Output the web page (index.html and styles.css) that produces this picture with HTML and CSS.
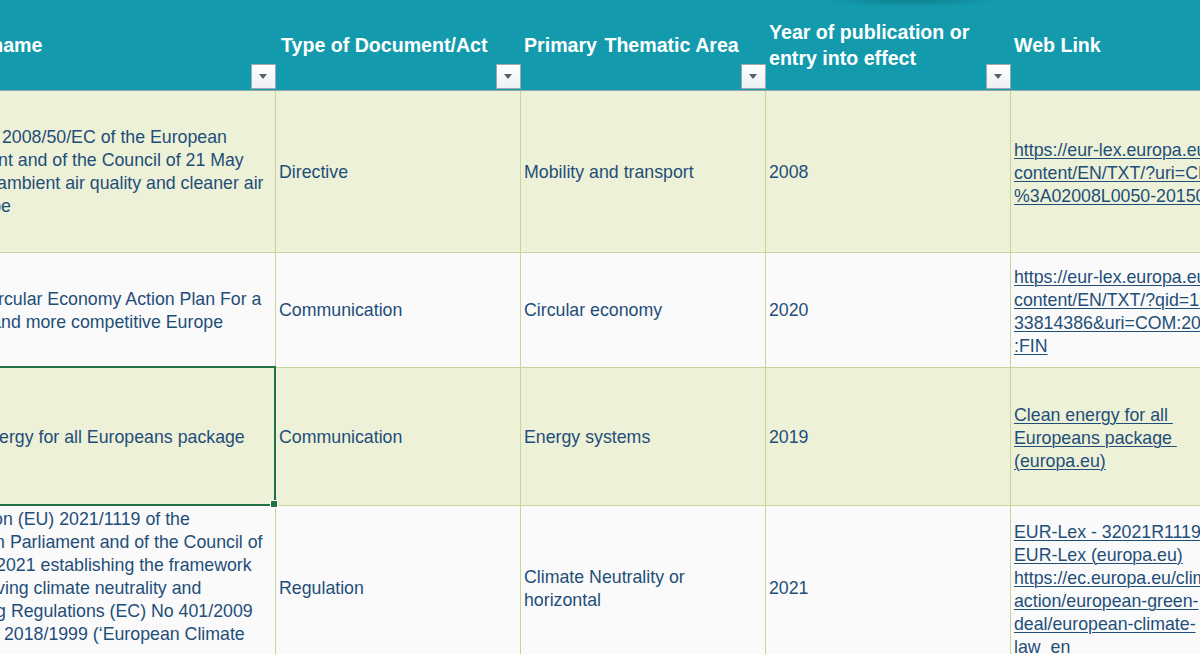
FILE: index.html
```html
<!DOCTYPE html>
<html lang="en">
<head>
<meta charset="utf-8">
<title>Policy sheet</title>
<link rel="stylesheet" href="styles.css">
</head>
<body>
<div class="sheet">
  <div class="row head">
    <div class="cell c1"><span class="htext">Policy name</span><span class="dd"></span></div>
    <div class="cell c2"><span class="htext indent">Type of Document/Act</span><span class="dd"></span></div>
    <div class="cell c3"><span class="htext">Primary <span class="gap"></span>Thematic Area</span><span class="dd"></span></div>
    <div class="cell c4"><span class="htext">Year of publication or<br>entry into effect</span><span class="dd"></span></div>
    <div class="cell c5"><span class="htext">Web Link</span></div>
  </div>

  <div class="row r1 alt">
    <div class="cell c1"><div class="txt">
      <span class="ln">Directive 2008/50/EC of the European</span>
      <span class="ln">Parliament and of the Council of 21 May</span>
      <span class="ln">2008 on ambient air quality and cleaner air</span>
      <span class="ln">for Europe</span>
    </div></div>
    <div class="cell c2"><div class="txt">Directive</div></div>
    <div class="cell c3"><div class="txt">Mobility and transport</div></div>
    <div class="cell c4"><div class="txt">2008</div></div>
    <div class="cell c5"><div class="txt link">
      <span class="ln">https://eur-lex.europa.eu/legal-</span>
      <span class="ln">content/EN/TXT/?uri=CELEX</span>
      <span class="ln">%3A02008L0050-20150918</span>
    </div></div>
  </div>

  <div class="row r2">
    <div class="cell c1"><div class="txt">
      <span class="ln">A new Circular Economy Action Plan For a</span>
      <span class="ln">cleaner and more competitive Europe</span>
    </div></div>
    <div class="cell c2"><div class="txt">Communication</div></div>
    <div class="cell c3"><div class="txt">Circular economy</div></div>
    <div class="cell c4"><div class="txt">2020</div></div>
    <div class="cell c5"><div class="txt link">
      <span class="ln">https://eur-lex.europa.eu/legal-</span>
      <span class="ln">content/EN/TXT/?qid=15839</span>
      <span class="ln">33814386&amp;uri=COM:2020:98</span>
      <span class="ln">:FIN</span>
    </div></div>
  </div>

  <div class="row r3 alt">
    <div class="cell c1 selected"><div class="txt">
      <span class="ln">Clean energy for all Europeans package</span>
    </div></div>
    <div class="cell c2"><div class="txt">Communication</div></div>
    <div class="cell c3"><div class="txt">Energy systems</div></div>
    <div class="cell c4"><div class="txt">2019</div></div>
    <div class="cell c5"><div class="txt link">
      <span class="ln">Clean energy for all </span>
      <span class="ln">Europeans package </span>
      <span class="ln">(europa.eu)</span>
    </div></div>
  </div>

  <div class="row r4">
    <div class="cell c1"><div class="txt">
      <span class="ln">Regulation (EU) 2021/1119 of the</span>
      <span class="ln">European Parliament and of the Council of</span>
      <span class="ln">30 June 2021 establishing the framework</span>
      <span class="ln">for achieving climate neutrality and</span>
      <span class="ln">amending Regulations (EC) No 401/2009</span>
      <span class="ln">and (EU) 2018/1999 (‘European Climate</span>
      <span class="ln">Law’)</span>
    </div></div>
    <div class="cell c2"><div class="txt">Regulation</div></div>
    <div class="cell c3"><div class="txt">
      <span class="ln">Climate Neutrality or</span>
      <span class="ln">horizontal</span>
    </div></div>
    <div class="cell c4"><div class="txt">2021</div></div>
    <div class="cell c5"><div class="txt link">
      <span class="ln">EUR-Lex - 32021R1119 - EN - </span>
      <span class="ln">EUR-Lex (europa.eu)</span>
      <span class="ln">https://ec.europa.eu/clima/eu-</span>
      <span class="ln">action/european-green-</span>
      <span class="ln">deal/european-climate-</span>
      <span class="ln">law_en</span>
    </div></div>
  </div>
</div>
</body>
</html>
```

FILE: styles.css
```css
html, body {
  margin: 0;
  padding: 0;
}

body {
  width: 1200px;
  height: 654px;
  overflow: hidden;
  background: #fafafa;
  font-family: "Liberation Sans", Arial, sans-serif;
  color: #1f4e79;
}

.sheet {
  margin-left: -75px;
  width: 1500px;
}

.row {
  display: flex;
}

.cell {
  box-sizing: border-box;
  position: relative;
  display: flex;
  align-items: center;
  padding: 1px 2px 0 3px;
  border-right: 1px solid #c4d79b;
  border-bottom: 1px solid #c4d79b;
}

.c1 { width: 351px; }
.c2, .c3, .c4 { width: 245px; }
.c5 { width: 400px; }

/* header */
.head {
  box-sizing: border-box;
  height: 91px;
  border-bottom: 1px solid #8fa9ad;
  background:
    radial-gradient(90px 7px at 985px 0, rgba(0, 70, 82, 0.32), rgba(0, 70, 82, 0)),
    #139bad;
}

.head .cell {
  height: 90px;
  padding: 0 2px 1px 3px;
  border: none;
}

.htext {
  color: #ffffff;
  font-weight: bold;
  font-size: 19.6px;
  line-height: 26px;
  white-space: nowrap;
}

.htext.indent {
  padding-left: 2px;
}

.gap {
  display: inline-block;
  width: 2px;
}

.dd {
  position: absolute;
  right: 0;
  bottom: 1px;
  box-sizing: border-box;
  width: 25px;
  height: 25px;
  border: 1px solid #a0a9b2;
  background: linear-gradient(#ffffff, #eef0f3);
}

.dd::after {
  content: "";
  position: absolute;
  left: 7px;
  top: 9px;
  width: 0;
  height: 0;
  border-left: 4.5px solid transparent;
  border-right: 4.5px solid transparent;
  border-top: 5px solid #5a5f66;
}

/* body rows */
.r1 { height: 162px; }
.r2 { height: 115px; }
.r3 { height: 138px; }
.r4 { height: 165px; }

.alt .cell { background: #edf1d7; }

.txt {
  font-size: 17.75px;
  line-height: 23px;
  white-space: nowrap;
}

.ln {
  display: block;
  white-space: pre;
}

.link {
  text-decoration: underline;
  text-decoration-thickness: 1px;
  text-underline-offset: 2px;
}

.c5 .link {
  padding-top: 2px;
}

/* active cell */
.selected {
  z-index: 2;
}

.selected::after {
  content: "";
  position: absolute;
  top: -2px;
  left: -2px;
  right: -1px;
  bottom: -1px;
  border: 2px solid #217346;
  pointer-events: none;
}

.selected::before {
  content: "";
  position: absolute;
  right: -3px;
  bottom: -3px;
  width: 6px;
  height: 6px;
  background: #217346;
  border: 1px solid #ffffff;
  z-index: 3;
}
```
